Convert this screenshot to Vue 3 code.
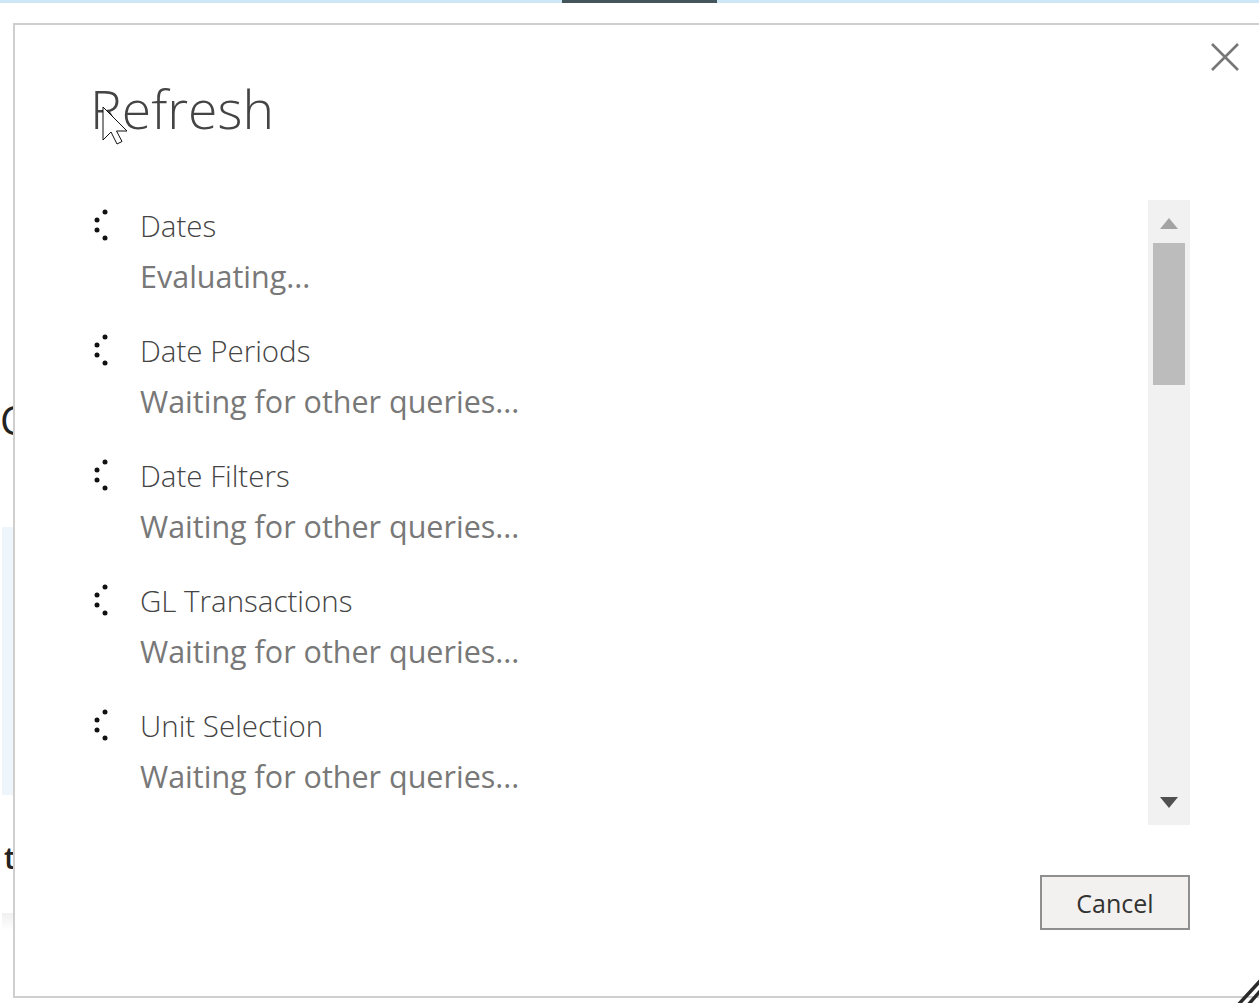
<script setup>
const queries = [
  { name: 'Dates', status: 'Evaluating...' },
  { name: 'Date Periods', status: 'Waiting for other queries...' },
  { name: 'Date Filters', status: 'Waiting for other queries...' },
  { name: 'GL Transactions', status: 'Waiting for other queries...' },
  { name: 'Unit Selection', status: 'Waiting for other queries...' },
]
</script>

<template>
  <div class="screen">
    <div class="topbar"><span class="active-tab"></span></div>

    <!-- bits of the page behind the dialog -->
    <span class="behind behind-c">C</span>
    <span class="behind behind-t">t</span>
    <div class="behind-panel"></div>
    <div class="behind-strip"></div>

    <div class="dialog">
      <header class="dialog-header">
        <h1 class="dialog-title">Refresh</h1>
        <button class="close-button" aria-label="Close">
          <svg width="30" height="30" viewBox="0 0 30 30">
            <path d="M2 2 L28 28 M28 2 L2 28" stroke="#777" stroke-width="2.6" fill="none" />
          </svg>
        </button>
      </header>

      <div class="dialog-body">
        <ul class="query-list">
          <li v-for="query in queries" :key="query.name" class="query">
            <svg class="spinner" width="18" height="32" viewBox="0 0 18 32">
              <circle cx="13" cy="3" r="2.500" />
              <circle cx="5" cy="11" r="2.500" />
              <circle cx="5" cy="21" r="2.500" />
              <circle cx="13" cy="29" r="2.500" />
            </svg>
            <div class="query-text">
              <div class="query-name">{{ query.name }}</div>
              <div class="query-status">{{ query.status }}</div>
            </div>
          </li>
        </ul>

        <div class="scrollbar">
          <svg class="arrow" width="22" height="12" viewBox="0 0 22 12">
            <path d="M11 1 L20 12 L2 12 Z" fill="#a3a3a3" />
          </svg>
          <div class="thumb"></div>
          <div class="track"></div>
          <svg class="arrow" width="22" height="12" viewBox="0 0 22 12">
            <path d="M2 0 L20 0 L11 11 Z" fill="#505050" />
          </svg>
        </div>
      </div>

      <footer class="dialog-footer">
        <button class="cancel-button">Cancel</button>
      </footer>
    </div>

    <svg class="grip" width="26" height="26" viewBox="0 0 26 26">
      <path d="M5 28 L28 3 M15 28 L28 13" stroke="#2a2a2a" stroke-width="3.500" fill="none" />
    </svg>

    <svg class="cursor" width="28" height="40" viewBox="0 0 28 40">
      <path
        d="M1 1 L1 34 L9 26 L15 38 L20 35.500 L14.500 25 L25 25 Z"
        fill="#fff"
        stroke="#111"
        stroke-width="1"
      />
    </svg>
  </div>
</template>

<style scoped>
.screen {
  position: relative;
  width: 1259px;
  height: 1003px;
  overflow: hidden;
  background: #fff;
  font-family: 'Open Sans', 'Liberation Sans', sans-serif;
}

.topbar {
  height: 3px;
  background: #cde7f6;
  display: flex;
  padding-left: 562px;
}

.active-tab {
  width: 155px;
  background: #44565c;
}

.behind {
  position: absolute;
  color: #222;
  font-size: 40px;
  line-height: 40px;
}

.behind-c {
  left: 0;
  top: 400px;
}

.behind-t {
  left: 4px;
  top: 838px;
  font-size: 30px;
  font-weight: 600;
}

.behind-panel {
  position: absolute;
  left: 2px;
  top: 527px;
  width: 11px;
  height: 268px;
  background: #eef5fb;
}

.behind-strip {
  position: absolute;
  left: 2px;
  top: 913px;
  width: 11px;
  height: 18px;
  background: linear-gradient(#f0f0f0, #fff);
}

.dialog {
  position: absolute;
  left: 13px;
  top: 23px;
  width: 1250px;
  height: 975px;
  box-sizing: border-box;
  border: 2px solid #d0cfcd;
  background: #fff;
  padding: 0 71px 0 77px;
  display: flex;
  flex-direction: column;
}

.dialog-header {
  position: relative;
  height: 175px;
  flex: none;
}

.dialog-title {
  margin: 0 0 0 -2px;
  padding-top: 45px;
  font-size: 53.500px;
  line-height: 78px;
  font-weight: 300;
  color: #444;
}

.close-button {
  position: absolute;
  right: -50px;
  top: 17px;
  width: 30px;
  height: 30px;
  padding: 0;
  border: 0;
  background: none;
}

.close-button svg {
  display: block;
}

.dialog-body {
  display: flex;
  height: 625px;
  flex: none;
}

.query-list {
  flex: 1;
  margin: 0;
  padding: 0;
  list-style: none;
}

.query {
  display: flex;
  height: 125px;
}

.spinner {
  flex: none;
  margin: 9px 31px 0 0;
  fill: #111;
}

.query-text {
  padding-top: 1px;
  margin-left: -1px;
}

.query-name,
.query-status {
  height: 50px;
  line-height: 50px;
  white-space: nowrap;
}

.query-name {
  font-size: 29.500px;
  font-weight: 300;
  color: #444;
}

.query-status {
  font-size: 30.500px;
  color: #787878;
}

.scrollbar {
  flex: none;
  width: 42px;
  box-sizing: border-box;
  padding: 17px 5px 16px;
  background: #f1f1f1;
  display: flex;
  flex-direction: column;
  align-items: center;
}

.arrow {
  flex: none;
}

.thumb {
  flex: none;
  align-self: stretch;
  height: 142px;
  margin-top: 14px;
  background: #bcbcbc;
}

.track {
  flex: 1;
}

.dialog-footer {
  display: flex;
  justify-content: flex-end;
  margin-top: 50px;
}

.cancel-button {
  width: 150px;
  height: 55px;
  padding: 0;
  border: 2px solid #8f8f8f;
  background: #f2f1f0;
  color: #333;
  font-family: inherit;
  font-size: 25px;
}

.grip {
  position: absolute;
  right: 0;
  bottom: 0;
}

.cursor {
  position: absolute;
  left: 102px;
  top: 106px;
}
</style>
